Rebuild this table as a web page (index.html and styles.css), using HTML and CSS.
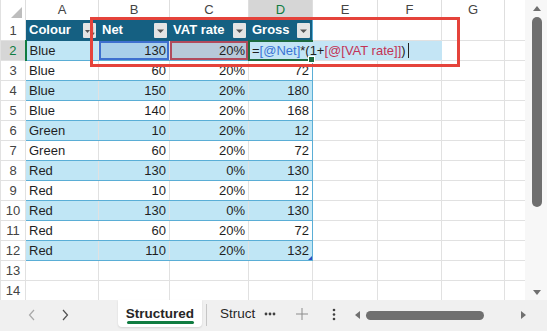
FILE: index.html
```html
<!DOCTYPE html>
<html lang="en">

<head>
  <meta charset="UTF-8">
  <meta name="viewport" content="width=device-width, initial-scale=1.0">
  <title>Structured</title>
  <link rel="stylesheet" href="styles.css">
</head>

<body>
  <div class="workbook">
    <div class="main">
      <div class="grid-wrap">
        <table class="sheet">
          <colgroup>
            <col class="col-rh">
            <col class="col-a">
            <col class="col-b">
            <col class="col-c">
            <col class="col-d">
            <col class="col-e">
            <col class="col-f">
            <col class="col-g">
            <col class="col-h">
          </colgroup>
          <thead>
            <tr class="letters">
              <th class="corner"><span class="corner-mark"></span></th>
              <th>A</th>
              <th>B</th>
              <th>C</th>
              <th class="sel">D</th>
              <th>E</th>
              <th>F</th>
              <th>G</th>
              <th></th>
            </tr>
          </thead>
          <tbody>
            <tr class="tbl-head">
              <th class="rh">1</th>
              <td>
                <div class="hcell">
                  <span>Colour</span>
                  <span class="filter">
                    <svg width="13" height="15" viewBox="0 0 13 15">
                      <path d="M2 7h5l-2.5 3z" fill="#555" />
                      <path d="M9.5 3.5v8" stroke="#555" stroke-width="1.2" />
                      <path d="M7.8 9.6l1.7 2.2 1.7-2.2" stroke="#555" stroke-width="1.1" fill="none" />
                    </svg>
                  </span>
                </div>
              </td>
              <td>
                <div class="hcell">
                  <span>Net</span>
                  <span class="filter"><svg width="13" height="15" viewBox="0 0 13 15"><path d="M3 6.5h7l-3.5 3.5z" fill="#555" /></svg></span>
                </div>
              </td>
              <td>
                <div class="hcell">
                  <span>VAT rate</span>
                  <span class="filter"><svg width="13" height="15" viewBox="0 0 13 15"><path d="M3 6.5h7l-3.5 3.5z" fill="#555" /></svg></span>
                </div>
              </td>
              <td class="last">
                <div class="hcell">
                  <span>Gross</span>
                  <span class="filter"><svg width="13" height="15" viewBox="0 0 13 15"><path d="M3 6.5h7l-3.5 3.5z" fill="#555" /></svg></span>
                </div>
              </td>
              <td></td><td></td><td></td><td></td>
            </tr>
            <tr class="row band">
              <th class="rh sel">2</th>
              <td class="txt">Blue</td>
              <td class="num ref-net">130</td>
              <td class="num ref-vat">20%</td>
              <td class="last active">
                <div class="editor">=<span class="f-net">[@Net]</span>*(1+<span class="f-vat">[@[VAT rate]]</span>)<span class="caret"></span></div>
                <span class="handle"></span>
              </td>
              <td></td><td></td><td></td><td></td>
            </tr>
            <tr class="row">
              <th class="rh">3</th>
              <td class="txt">Blue</td><td class="num">60</td><td class="num">20%</td><td class="num last">72</td>
              <td></td><td></td><td></td><td></td>
            </tr>
            <tr class="row band">
              <th class="rh">4</th>
              <td class="txt">Blue</td><td class="num">150</td><td class="num">20%</td><td class="num last">180</td>
              <td></td><td></td><td></td><td></td>
            </tr>
            <tr class="row">
              <th class="rh">5</th>
              <td class="txt">Blue</td><td class="num">140</td><td class="num">20%</td><td class="num last">168</td>
              <td></td><td></td><td></td><td></td>
            </tr>
            <tr class="row band">
              <th class="rh">6</th>
              <td class="txt">Green</td><td class="num">10</td><td class="num">20%</td><td class="num last">12</td>
              <td></td><td></td><td></td><td></td>
            </tr>
            <tr class="row">
              <th class="rh">7</th>
              <td class="txt">Green</td><td class="num">60</td><td class="num">20%</td><td class="num last">72</td>
              <td></td><td></td><td></td><td></td>
            </tr>
            <tr class="row band">
              <th class="rh">8</th>
              <td class="txt">Red</td><td class="num">130</td><td class="num">0%</td><td class="num last">130</td>
              <td></td><td></td><td></td><td></td>
            </tr>
            <tr class="row">
              <th class="rh">9</th>
              <td class="txt">Red</td><td class="num">10</td><td class="num">20%</td><td class="num last">12</td>
              <td></td><td></td><td></td><td></td>
            </tr>
            <tr class="row band">
              <th class="rh">10</th>
              <td class="txt">Red</td><td class="num">130</td><td class="num">0%</td><td class="num last">130</td>
              <td></td><td></td><td></td><td></td>
            </tr>
            <tr class="row">
              <th class="rh">11</th>
              <td class="txt">Red</td><td class="num">60</td><td class="num">20%</td><td class="num last">72</td>
              <td></td><td></td><td></td><td></td>
            </tr>
            <tr class="row band">
              <th class="rh">12</th>
              <td class="txt">Red</td><td class="num">110</td><td class="num">20%</td>
              <td class="num last corner-cell">132<span class="resize"></span></td>
              <td></td><td></td><td></td><td></td>
            </tr>
            <tr>
              <th class="rh">13</th>
              <td></td><td></td><td></td><td></td><td></td><td></td><td></td><td></td>
            </tr>
            <tr>
              <th class="rh">14</th>
              <td></td><td></td><td></td><td></td><td></td><td></td><td></td><td></td>
            </tr>
          </tbody>
        </table>
        <!-- highlight box drawn over row 2 -->
        <div class="callout"></div>
      </div>

      <div class="vscroll">
        <svg class="arrow-up" width="10" height="7" viewBox="0 0 10 7"><path d="M1 6h8L5 1z" fill="#707070" /></svg>
        <div class="vthumb"></div>
        <svg class="arrow-down" width="10" height="7" viewBox="0 0 10 7"><path d="M1 1h8L5 6z" fill="#707070" /></svg>
      </div>
    </div>

    <div class="tabbar">
      <span class="nav prev"><svg width="7" height="12" viewBox="0 0 7 12"><path d="M6 1L1.5 6 6 11" stroke="#a8a8a8" stroke-width="1.2" fill="none" /></svg></span>
      <span class="nav next"><svg width="7" height="12" viewBox="0 0 7 12"><path d="M1 1l4.5 5L1 11" stroke="#505050" stroke-width="1.2" fill="none" /></svg></span>
      <div class="tab current">Structured</div>
      <span class="tab-sep"></span>
      <div class="tab other">Struct</div>
      <span class="more"><svg width="12" height="4" viewBox="0 0 12 4"><circle cx="2" cy="2" r="1.4" fill="#404040" /><circle cx="6" cy="2" r="1.4" fill="#404040" /><circle cx="10" cy="2" r="1.4" fill="#404040" /></svg></span>
      <span class="add"><svg width="12" height="12" viewBox="0 0 12 12"><path d="M6 0v12M0 6h12" stroke="#8c8c8c" stroke-width="1" /></svg></span>
      <span class="kebab"><svg width="4" height="13" viewBox="0 0 4 13"><circle cx="2" cy="2" r="1.3" fill="#404040" /><circle cx="2" cy="6.5" r="1.3" fill="#404040" /><circle cx="2" cy="11" r="1.3" fill="#404040" /></svg></span>
      <div class="hscroll">
        <svg width="6" height="8" viewBox="0 0 6 8"><path d="M5 0v8L0 4z" fill="#707070" /></svg>
        <div class="hthumb"></div>
        <svg class="h-right" width="6" height="8" viewBox="0 0 6 8"><path d="M1 0v8l5-4z" fill="#707070" /></svg>
      </div>
    </div>
  </div>
</body>

</html>
```

FILE: styles.css
```css
body {
  margin: 0;
  font-family: "Liberation Sans", Arial, sans-serif;
  font-size: 13px;
  color: #1f1f1f;
  background: #ffffff;
}

.workbook {
  width: 547px;
  height: 331px;
  overflow: hidden;
}

.main {
  display: flex;
  height: 300px;
}

.grid-wrap {
  position: relative;
  width: 525px;
  height: 300px;
  overflow: hidden;
}

/* sheet grid */

.sheet {
  table-layout: fixed;
  border-collapse: collapse;
  width: 525px;
}

.col-rh { width: 25px; }
.col-a { width: 73px; }
.col-b { width: 71px; }
.col-c { width: 79px; }
.col-d { width: 64px; }
.col-e { width: 65px; }
.col-f { width: 64px; }
.col-g { width: 63px; }
.col-h { width: 21px; }

.sheet tr {
  height: 20px;
}

.sheet th,
.sheet td {
  padding: 0 3px;
  border: 1px solid #e1e1e1;
  border-top: none;
  line-height: 18px;
  white-space: nowrap;
  vertical-align: bottom;
  overflow: hidden;
}

.sheet tr:last-child td,
.sheet tr:last-child th {
  border-bottom: none;
}

.letters th {
  font-weight: normal;
  color: #444;
  text-align: center;
  background: #fff;
  border-bottom-color: #d4d4d4;
  border-right-color: #dedede;
  vertical-align: middle;
}

.letters th.sel {
  background: #d6d6d6;
  color: #107c41;
  border-bottom: 2px solid #107c41;
}

.corner {
  position: relative;
}

.corner-mark {
  position: absolute;
  right: 3px;
  bottom: 2px;
  width: 0;
  height: 0;
  border-left: 11px solid transparent;
  border-bottom: 11px solid #bdbdbd;
}

.rh {
  font-weight: normal;
  color: #444;
  text-align: center;
  padding: 0;
  background: #fff;
  border-right-color: #d4d4d4;
  border-bottom-color: #e4e4e4;
}

.rh.sel {
  background: #d6d6d6;
  color: #107c41;
  border-right: 2px solid #107c41;
}

/* table rows */

.tbl-head td:nth-child(-n+5) {
  background: #156082;
  color: #fff;
  font-weight: bold;
  border-color: #156082;
  padding: 0 2px 0 3px;
}

.tbl-head td.last {
  border-right-color: #5aaed6;
}

.hcell {
  display: flex;
  align-items: center;
  justify-content: space-between;
  height: 19px;
}

.filter {
  display: flex;
  width: 13px;
  height: 15px;
  background: #e4e4e4;
  border-radius: 1px;
}

.row td:nth-child(-n+5) {
  border-bottom-color: #5aaed6;
}

.row td.last {
  border-right-color: #5aaed6;
}

.band td:nth-child(-n+5) {
  background: #c0e6f5;
}

.band td:nth-child(n+3):nth-child(-n+5) {
  border-left-color: #d6ecf5;
}

.txt {
  text-align: left;
}

.num {
  text-align: right;
}

/* formula reference colours */

.band td.ref-net {
  background: #a9cfea;
  box-shadow: inset 0 0 0 2px #3e6fcf;
}

.band td.ref-vat {
  background: #b7c9d9;
  box-shadow: inset 0 0 0 2px #b14a5c;
}

td.active {
  position: relative;
  overflow: visible;
}

td.active::after {
  content: "";
  position: absolute;
  left: -1px;
  top: -1px;
  right: -1px;
  bottom: -1px;
  border: 2px solid #1d6b3f;
  border-right: none;
  z-index: 3;
}

.editor {
  position: absolute;
  left: 0;
  top: 0;
  width: 190px;
  height: 19px;
  padding-left: 3px;
  background: #c4e5f5;
  line-height: 19px;
  z-index: 2;
}

.f-net {
  color: #3a74d6;
}

.f-vat {
  color: #c33355;
}

.caret {
  display: inline-block;
  width: 1px;
  height: 15px;
  margin-left: 2px;
  vertical-align: -3px;
  background: #222;
}

.handle {
  position: absolute;
  right: -3px;
  bottom: -3px;
  width: 5px;
  height: 5px;
  background: #1d6b3f;
  border: 1px solid #fff;
  z-index: 4;
}

td.corner-cell {
  position: relative;
}

.resize {
  position: absolute;
  right: 0;
  bottom: 0;
  width: 0;
  height: 0;
  border-left: 4px solid transparent;
  border-bottom: 4px solid #2c4fc2;
}

.callout {
  position: absolute;
  left: 90px;
  top: 17px;
  width: 364px;
  height: 44px;
  border: 3px solid #e5433b;
  z-index: 5;
}

/* vertical scroll bar */

.vscroll {
  position: relative;
  width: 22px;
  height: 300px;
  background: #f7f7f7;
}

.arrow-up {
  position: absolute;
  left: 7px;
  top: 5px;
}

.vthumb {
  position: absolute;
  left: 7px;
  top: 17px;
  width: 10px;
  height: 190px;
  border-radius: 5px;
  background: #6f6f6f;
}

.arrow-down {
  position: absolute;
  left: 7px;
  top: 289px;
}

/* sheet tabs */

.tabbar {
  display: flex;
  align-items: flex-start;
  height: 31px;
  background: #f0f0f0;
  color: #262626;
}

.nav {
  display: flex;
  margin-top: 9px;
}

.prev {
  margin-left: 28px;
}

.next {
  margin-left: 27px;
}

.tab {
  height: 27px;
  line-height: 27px;
  font-size: 13.5px;
}

.current {
  position: relative;
  margin-left: 49px;
  width: 84px;
  text-align: center;
  font-weight: bold;
  background: #fff;
  border-radius: 0 0 4px 4px;
  box-shadow: 0 1px 2px rgba(0, 0, 0, 0.12);
}

.current::after {
  content: "";
  position: absolute;
  left: 9px;
  right: 8px;
  bottom: 3px;
  height: 3px;
  border-radius: 2px;
  background: #107c41;
}

.tab-sep {
  width: 1px;
  height: 22px;
  margin: 4px 0 0 4px;
  background: #c6c6c6;
}

.other {
  width: 34px;
  margin-left: 13px;
  white-space: nowrap;
}

.more {
  display: flex;
  margin: 12px 0 0 10px;
}

.add {
  display: flex;
  margin: 8px 0 0 20px;
}

.kebab {
  display: flex;
  margin: 8px 0 0 24px;
}

.hscroll {
  display: flex;
  align-items: center;
  margin: 10px 0 0 19px;
  height: 10px;
}

.hthumb {
  width: 118px;
  height: 9px;
  margin-left: 5px;
  border-radius: 5px;
  background: #707070;
}

.h-right {
  margin-left: 36px;
}
```
